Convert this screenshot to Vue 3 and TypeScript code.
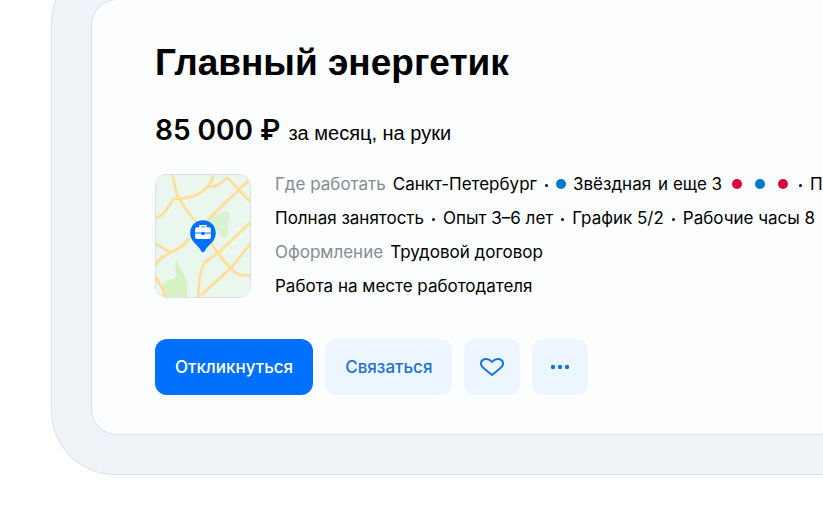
<script setup lang="ts">
import { ref } from 'vue'

const stations: string[] = ['red', 'blue', 'red']
const terms: string[] = ['Полная занятость', 'Опыт 3–6 лет', 'График 5/2', 'Рабочие часы 8']
const liked = ref(false)
</script>

<template>
  <main class="page">
    <div class="frame">
      <article class="card">
        <h1 class="title">Главный энергетик</h1>
        <p class="pay"><strong class="sum">85 000 ₽</strong><span class="period">за месяц, на руки</span></p>

        <section class="details">
          <a class="map" href="#map" aria-label="Карта">
            <svg viewBox="0 0 96 124" preserveAspectRatio="xMidYMid slice" aria-hidden="true">
              <rect width="96" height="124" fill="#eaf7ee" />
              <path d="M53 46C59 43 62 38 70 37C75 37 76 41 75 46C71 51 75 55 73 60C71 66 69 65 66 61C65 56 55 53 53 46Z" fill="#d9f2cf" />
              <path d="M6 124C5 113 8 106 18 106C24 100 17 91 21 86C24 96 31 102 32 110V124Z" fill="#d6f2c4" />
              <g fill="none" stroke="#ffdf9b" stroke-width="3">
                <path d="M0 44C11 40 13 31 18 24C38 24 46 19 53 12C56 9 57 4 59 0" />
                <path d="M17 0C20 14 21 22 28 31L41 49L66 83L79 98C84 102 89 102 96 102" />
                <path d="M53 11C66 14 66 6 73 3L96 27" />
                <path d="M96 4L48 50L29 70C18 81 5 79 0 92" />
                <path d="M0 70L14 78" />
                <path d="M43 124C44 111 44 94 52 87L66 77L96 48" />
                <path d="M46 122L76 95L96 70" />
                <path d="M0 104L9 119V124" />
              </g>
              <path d="M48 46C40 46 35 52 35 59C35 68 43 71 46 77C47 79 49 79 50 77C53 71 61 68 61 59C61 52 56 46 48 46Z" fill="#0070ff" />
              <path d="M45 54V51.500H51V54" fill="none" stroke="#fff" stroke-width="1.500" />
              <rect x="40" y="53" width="16" height="12" rx="2" fill="#fff" />
              <path d="M40 59H56" stroke="#0070ff" stroke-width="1" />
              <rect x="46.500" y="58" width="3" height="3" fill="#0070ff" />
            </svg>
          </a>

          <div class="facts">
            <p class="fact">
              <span class="label">Где работать</span>
              <span>Санкт-Петербург</span>
              <i class="sep"></i>
              <span class="station"><i class="metro blue"></i>Звёздная</span>
              <span class="more">и еще 3</span>
              <span class="metros"><i v-for="(line, i) in stations" :key="i" class="metro" :class="line"></i></span>
              <i class="sep"></i>
              <span>П</span>
            </p>
            <p class="fact">
              <template v-for="(term, i) in terms" :key="term">
                <i v-if="i" class="sep"></i>
                <span>{{ term }}</span>
              </template>
            </p>
            <p class="fact">
              <span class="label">Оформление</span>
              <span>Трудовой договор</span>
            </p>
            <p class="fact"><span>Работа на месте работодателя</span></p>
          </div>
        </section>

        <div class="actions">
          <button type="button" class="btn primary">Откликнуться</button>
          <button type="button" class="btn">Связаться</button>
          <button type="button" class="btn icon" aria-label="В избранное" :aria-pressed="liked" @click="liked = !liked">
            <svg width="28" height="24" viewBox="0 0 28 24" aria-hidden="true">
              <path d="M14 20L6 13.500C3.200 11.100 2.200 8.200 3.700 5.900C5.900 3 11 3.200 14 7C17 3.200 22.100 3 24.300 5.900C25.800 8.200 24.800 11.100 22 13.500Z" :fill="liked ? '#1973d2' : 'none'" stroke="#1973d2" stroke-width="2" stroke-linejoin="round" />
            </svg>
          </button>
          <button type="button" class="btn icon" aria-label="Ещё">
            <svg width="20" height="6" viewBox="0 0 20 6" fill="#1973d2" aria-hidden="true">
              <circle cx="3" cy="3" r="2.200" />
              <circle cx="10" cy="3" r="2.200" />
              <circle cx="17" cy="3" r="2.200" />
            </svg>
          </button>
        </div>
      </article>
    </div>
  </main>
</template>

<style>
body {
  margin: 0;
  background: #fff;
}
</style>

<style scoped>
.page {
  overflow: hidden;
  padding: 0 0 31px 51px;
  font-family: Inter, "Liberation Sans", sans-serif;
  color: #000;
}
.frame {
  margin-top: -41px;
  padding: 39px 0 39px 39px;
  border: 1px solid #dce3eb;
  border-right: 0;
  border-radius: 64px 0 0 64px;
  background: #eff3f8;
}
.card {
  padding: 39px 0 39px 63px;
  border: 1px solid #dce3eb;
  border-right: 0;
  border-radius: 26px 0 0 26px;
  background: #fbfdff;
}
.title {
  margin: 0;
  font-family: "Liberation Sans", Arial, sans-serif;
  font-size: 37px;
  line-height: 48px;
  font-weight: 700;
}
.pay {
  display: flex;
  align-items: baseline;
  gap: 8px;
  margin: 23px 0 21px;
  line-height: 40px;
}
.sum {
  font-size: 28px;
  font-weight: 600;
}
.period {
  font-family: "Liberation Sans", Arial, sans-serif;
  font-size: 20px;
}
.details {
  display: flex;
  gap: 24px;
}
.map {
  flex: none;
  box-sizing: border-box;
  width: 96px;
  height: 124px;
  overflow: hidden;
  border: 1px solid #d9e0e3;
  border-radius: 12px;
}
.map svg {
  display: block;
  width: 100%;
  height: 100%;
}
.facts {
  display: grid;
  gap: 14px;
  align-content: start;
  min-width: 0;
}
.fact {
  display: flex;
  align-items: center;
  gap: 7px;
  margin: 0;
  font-size: 17px;
  line-height: 20px;
  white-space: nowrap;
}
.label {
  color: #858c93;
}
.sep {
  flex: none;
  width: 3px;
  height: 3px;
  margin: 3px 1px 0;
  border-radius: 50%;
  background: #000;
}
.station {
  display: flex;
  align-items: center;
  gap: 7px;
}
.metros {
  display: flex;
  gap: 13px;
  margin: 0 3px;
}
.metro {
  width: 10px;
  height: 10px;
  border-radius: 50%;
}
.blue {
  background: #0078c9;
}
.red {
  background: #d6083b;
}
.actions {
  display: flex;
  gap: 12px;
  margin-top: 41px;
}
.btn {
  display: flex;
  align-items: center;
  justify-content: center;
  height: 56px;
  padding: 0 20px;
  border: 0;
  border-radius: 12px;
  background: #edf5ff;
  color: #1973d2;
  font: 600 16px/24px Inter, "Liberation Sans", sans-serif;
  font-size: 17px;
  font-weight: 500;
  cursor: pointer;
}
.primary {
  background: #0070ff;
  color: #fff;
}
.icon {
  width: 56px;
  padding: 0;
}
</style>
